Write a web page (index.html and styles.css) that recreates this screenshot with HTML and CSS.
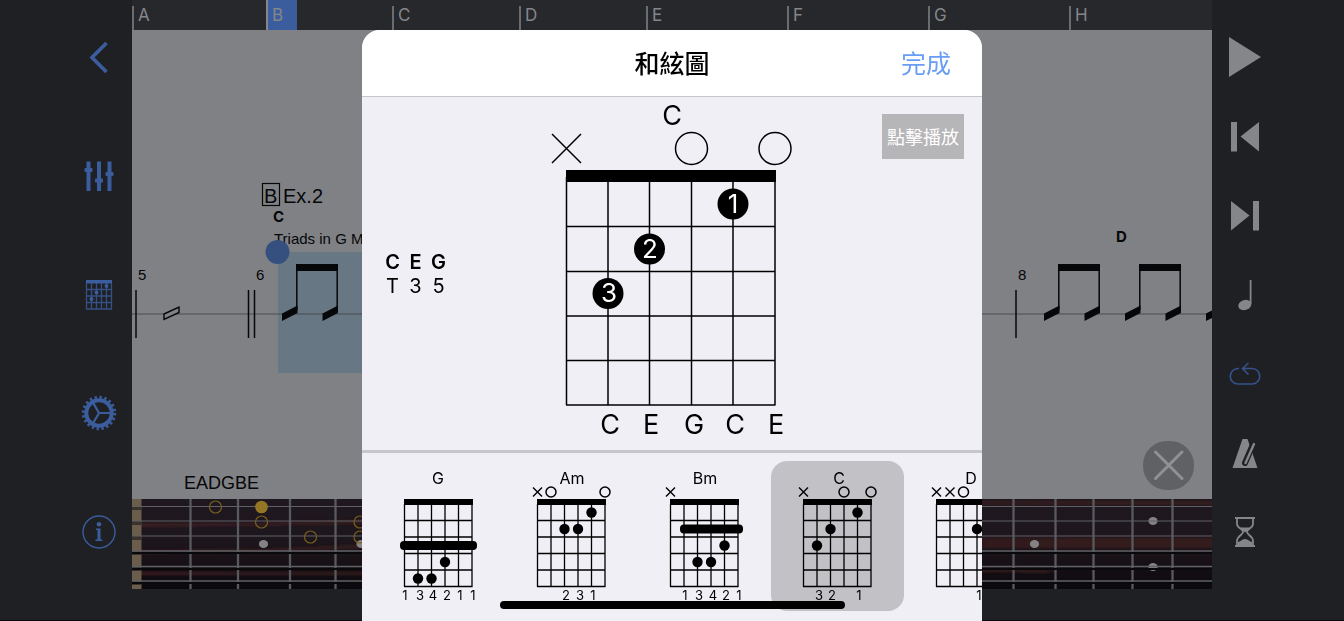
FILE: index.html
```html
<!DOCTYPE html>
<html lang="zh-Hant">
<head>
    <meta charset="UTF-8">
    <meta name="viewport" content="width=device-width, initial-scale=1.0">
    <title>和絃圖</title>
    <link rel="stylesheet" href="styles.css">
</head>
<body>

    <!-- Shared shapes -->
    <svg class="defs" width="0" height="0" aria-hidden="true">
        <defs>
            <g id="grid">
                <rect x="32" y="38" width="69" height="6"/>
                <path d="M32.5 43V126M46 43V126M59.5 43V126M73 43V126M86.5 43V126M100 43V126M32 59.5H100.5M32 76H100.5M32 92.5H100.5M32 109H100.5M32 125.5H100.5" fill="none" stroke="#000" stroke-width="1.3"/>
            </g>
            <path id="mute" d="M-4.5 -4.5L4.5 4.5M4.5 -4.5L-4.5 4.5" fill="none" stroke="#000" stroke-width="1.4"/>
            <circle id="open" r="5" fill="none" stroke="#000" stroke-width="1.5"/>
            <circle id="dot" r="5.2"/>
            <path id="slash" d="M0 283.5L15.5 275.5V283L0 291Z"/>
            <g id="eighths">
                <use href="#slash"/>
                <use href="#slash" x="40.5"/>
                <path d="M14 234H56V241H14Z"/>
                <path d="M14.8 234V280M55.2 234V280" stroke="#060709" stroke-width="1.5"/>
            </g>
            <linearGradient id="wood" x1="0" y1="0" x2="0" y2="1">
                <stop offset="0" stop-color="#1f1820"/>
                <stop offset="0.45" stop-color="#1d161c"/>
                <stop offset="0.75" stop-color="#160f14"/>
                <stop offset="1" stop-color="#0a090d"/>
            </linearGradient>
            <linearGradient id="grain">
                <stop offset="0" stop-color="#3b1f22"/>
                <stop offset="0.3" stop-color="#2b191d"/>
                <stop offset="1" stop-color="#361a1c"/>
            </linearGradient>
            <filter id="soft" x="0" width="1" y="-0.5" height="2">
                <feGaussianBlur stdDeviation="6 1"/>
            </filter>
        </defs>
    </svg>

    <div class="app">
        <!-- Left tools -->
        <nav class="tools tools-left">
            <button class="tool" aria-label="返回">
                <svg width="36" height="36" viewBox="0 0 36 36"><path d="M25.5 4L11 18.5L25.5 33" fill="none" stroke="currentColor" stroke-width="3.6"/></svg>
            </button>
            <button class="tool" aria-label="混音">
                <svg width="36" height="36" viewBox="0 0 36 36" fill="currentColor"><path d="M5.5 3.5H9.500V33H5.500ZM16 3.500H20V33H16ZM26.500 3.500H30.500V33H26.500Z"/><rect x="3.500" y="10" width="8" height="4" rx="1"/><rect x="14" y="20.500" width="8" height="4" rx="1"/><rect x="24.500" y="14" width="8" height="4" rx="1"/></svg>
            </button>
            <button class="tool" aria-label="和絃圖">
                <svg width="36" height="36" viewBox="0 0 36 36" fill="currentColor"><path d="M5 3H31V6.5H5Z"/><path d="M5.500 5V32.500M10.500 5V32.500M15.500 5V32.500M20.500 5V32.500M25.500 5V32.500M30.500 5V32.500M5 12.500H31M5 19H31M5 25.500H31M5 32H31" stroke="currentColor" stroke-width="1.3" opacity="0.8"/><circle cx="25.5" cy="9" r="2"/><circle cx="15.5" cy="15.5" r="2"/><circle cx="10.5" cy="22" r="2"/></svg>
            </button>
            <button class="tool" aria-label="設定">
                <svg width="36" height="36" viewBox="0 0 36 36" fill="none" stroke="currentColor"><circle cx="18" cy="18" r="15.700" stroke-width="3" stroke-dasharray="2.3 2.632"/><circle cx="18" cy="18" r="12.7" stroke-width="4"/><path d="M18 18H30M18 18L12 7.6M18 18L12 28.4" stroke-width="2.2"/></svg>
            </button>
            <button class="tool" aria-label="資訊">
                <svg width="36" height="36" viewBox="0 0 36 36"><circle cx="18" cy="18" r="16" fill="none" stroke="currentColor" stroke-width="1.4"/><circle cx="18" cy="10.2" r="2.3" fill="currentColor"/><path d="M15 14.5H19.5V25.500H21.500V27H14.500V25.500H16.500V16H15Z" fill="currentColor"/></svg>
            </button>
        </nav>

        <main class="stage">
            <div class="timeline">
                <span class="mark">A</span>
                <span class="mark current">B</span>
                <span class="mark">C</span>
                <span class="mark">D</span>
                <span class="mark">E</span>
                <span class="mark">F</span>
                <span class="mark">G</span>
                <span class="mark">H</span>
            </div>

            <div class="score">
                <svg class="sheet" width="100%" height="100%" fill="#060709">
                    <rect x="146" y="222" width="216" height="121" fill="#677784"/>
                    <path d="M0 284H1080" stroke="#4b4c50" stroke-width="1"/>
                    <path d="M4 260V308M116.5 260V308M122.5 260V308M884 260V308" stroke="#060709" stroke-width="1.5"/>
                    <path d="M32 284L47 277V282.5L32 289.5Z" fill="#808184" stroke="#060709" stroke-width="1.4"/>
                    <use href="#eighths" x="150"/>
                    <use href="#eighths" x="912"/>
                    <use href="#eighths" x="993"/>
                    <use href="#slash" x="1074"/>
                    <rect x="130.5" y="153.5" width="17" height="22" fill="none" stroke="#060709" stroke-width="1.2"/>
                    <text class="heading" x="132" y="173">B</text>
                    <text class="heading" x="151" y="173">Ex.2</text>
                    <text class="chord" x="141" y="192">C</text>
                    <text class="small" x="142" y="214">Triads in G Major</text>
                    <text class="chord" x="984" y="212">D</text>
                    <text class="small" x="6" y="250">5</text>
                    <text class="small" x="124" y="250">6</text>
                    <text class="small" x="886" y="250">8</text>
                    <text class="tuning" x="52" y="459">EADGBE</text>
                    <circle cx="145.5" cy="222" r="12" fill="#35507f"/>
                </svg>
                <button class="close" aria-label="關閉">
                    <svg width="32" height="32" viewBox="0 0 32 32"><path d="M2.5 2L29 28.5M29 2L2.5 28.5" stroke="#909195" stroke-width="3" stroke-linecap="round"/></svg>
                </button>
            </div>

            <svg class="fretboard" width="100%" height="90">
                <rect width="100%" height="90" fill="url(#wood)"/>
                <g filter="url(#soft)">
                    <path d="M0 24H120L240 20V25L120 27L0 28ZM0 51L130 50L240 45V49L130 53L0 55ZM0 73H240V76H0ZM840 39H1090V49H840ZM840 2H1090V6H840ZM840 68L920 71V74L840 73Z" fill="url(#grain)"/>
                </g>
                <path d="M58.5 0V90M106 0V90M158 0V90M203.5 0V90M881.5 0V90M923.5 0V90M961.5 0V90M1000.5 0V90M1040.5 0V90" stroke="#595a5f" stroke-width="2.3"/>
                <rect width="9.5" height="90" fill="#6b5d4c"/>
                <path d="M0 9H9.5M0 24H9.5M0 39H9.5M0 54H9.5M0 70H9.5M0 84H9.5" stroke="#3a332c" stroke-width="4"/>
                <g fill="#838385"><ellipse cx="131.5" cy="45" rx="4.6" ry="4"/><ellipse cx="229" cy="45" rx="4.6" ry="4"/><ellipse cx="902.5" cy="45" rx="4.6" ry="4"/><ellipse cx="1021" cy="22" rx="4.6" ry="4"/><ellipse cx="1021" cy="68" rx="4.6" ry="4"/></g>
                <path d="M0 54H1080M0 70H1080M0 84H1080" stroke="#09080b" stroke-width="2"/>
                <g stroke="#606166"><path d="M0 7.5H1080M0 22H1080M0 37H1080" stroke-width="1"/><path d="M0 52H1080M0 67.5H1080M0 82H1080" stroke-width="1.6"/></g>
                <g fill="none" stroke="#77601f" stroke-width="1.2"><circle cx="83.5" cy="8" r="6"/><circle cx="129.5" cy="23" r="6"/><circle cx="178.5" cy="38" r="6"/><circle cx="228" cy="23" r="6"/><circle cx="228" cy="38" r="6"/></g>
                <circle cx="129.5" cy="8" r="6.3" fill="#947624"/>
            </svg>
        </main>

        <!-- Right transport -->
        <nav class="tools tools-right">
            <button class="tool" aria-label="播放">
                <svg width="36" height="42" viewBox="0 0 36 42" fill="currentColor"><path d="M2 1L34 21L2 41Z"/></svg>
            </button>
            <button class="tool" aria-label="上一段">
                <svg width="36" height="36" viewBox="0 0 36 36" fill="currentColor"><path d="M4 4H10V33.5H4ZM32 4V33.5L13.5 18.500Z"/></svg>
            </button>
            <button class="tool" aria-label="下一段">
                <svg width="36" height="36" viewBox="0 0 36 36" fill="currentColor"><path d="M26 4H32V33.5H26ZM4 4V33.5L22.500 18.500Z"/></svg>
            </button>
            <button class="tool" aria-label="速度">
                <svg width="36" height="36" viewBox="0 0 36 36" fill="currentColor"><ellipse cx="17.8" cy="29" rx="6.7" ry="5" transform="rotate(-18 17.8 29)"/><path d="M22.7 4H24.500V28H22.700Z"/></svg>
            </button>
            <button class="tool loop" aria-label="循環">
                <svg width="36" height="36" viewBox="0 0 36 36" fill="none" stroke="currentColor" stroke-width="1.6"><path d="M12 12.5H11A7.700 7.700 0 0 0 11 28H25A7.700 7.700 0 0 0 25 12.500H16M21.500 7L15.500 12.500L21.500 18.500"/></svg>
            </button>
            <button class="tool" aria-label="節拍器">
                <svg width="36" height="36" viewBox="0 0 36 36"><path d="M15.5 4H20.5L30.5 33H5.500Z" fill="currentColor"/><path d="M26 9.500L18 28" stroke="#1f2024" stroke-width="6" stroke-linecap="round"/><path d="M27 9L18.500 28" stroke="currentColor" stroke-width="2.4" stroke-linecap="round"/></svg>
            </button>
            <button class="tool" aria-label="倒數">
                <svg width="36" height="36" viewBox="0 0 36 36"><path d="M8 4H28M8 32H28" stroke="currentColor" stroke-width="2"/><path d="M10 4V10C10 14 16 15 16 18C16 21 10 22 10 27V32M26 4V10C26 14 20 15 20 18C20 21 26 22 26 27V32" fill="none" stroke="currentColor" stroke-width="1.8"/><path d="M11 13.500H25L18 18.500ZM11 31V28C13 28 15 25 18 25S23 28 25 28V31Z" fill="currentColor"/></svg>
            </button>
        </nav>
    </div>

    <!-- Chord sheet -->
    <div class="overlay">
        <section class="modal" role="dialog" aria-labelledby="modalTitle">
            <header class="modal-header">
                <h1 id="modalTitle">和絃圖</h1>
                <button class="done">完成</button>
            </header>

            <div class="detail">
                <table class="tones">
                    <tr><th>C</th><th>E</th><th>G</th></tr>
                    <tr><td>T</td><td>3</td><td>5</td></tr>
                </table>

                <svg class="big-chord" width="250" height="353">
                    <text x="125" y="28">C</text>
                    <g fill="none" stroke="#000" stroke-width="1.5">
                        <path d="M5 37L34 66M34 37L5 66"/>
                        <circle cx="144.5" cy="51.5" r="16"/>
                        <circle cx="228" cy="51.5" r="16"/>
                        <path d="M19.5 80V308M61 80V308M102.5 80V308M144.5 80V308M186 80V308M228 80V308M19 129.5H228.5M19 174.5H228.5M19 219H228.5M19 263.5H228.5M19 308H228.5"/>
                    </g>
                    <rect x="19" y="73" width="210" height="12"/>
                    <circle cx="186" cy="107" r="15.5"/>
                    <circle cx="102.5" cy="152" r="15.5"/>
                    <circle cx="61" cy="196.5" r="15.5"/>
                    <g class="finger">
                        <text x="186" y="116">1</text>
                        <text x="103" y="161">2</text>
                        <text x="62" y="205">3</text>
                    </g>
                    <text x="63" y="337">C</text>
                    <text x="104" y="337">E</text>
                    <text x="147" y="337">G</text>
                    <text x="188" y="337">C</text>
                    <text x="229" y="337">E</text>
                </svg>

                <button class="play">點擊播放</button>
            </div>

            <div class="strip">
                <button class="card" aria-label="G">
                    <svg width="133" height="150">
                        <text class="name" x="66" y="23">G</text>
                        <use href="#grid"/>
                        <rect x="28" y="80" width="77" height="9" rx="4"/>
                        <use href="#dot" x="73" y="101"/><use href="#dot" x="46" y="117.5"/><use href="#dot" x="59.5" y="117.5"/>
                        <text x="33" y="139">1</text><text x="48" y="139">3</text><text x="61" y="139">4</text><text x="75" y="139">2</text><text x="88" y="139">1</text><text x="101" y="139">1</text>
                    </svg>
                </button>
                <button class="card" aria-label="Am">
                    <svg width="133" height="150">
                        <text class="name" x="67" y="23">Am</text>
                        <use href="#grid"/>
                        <use href="#mute" x="32.5" y="31"/><use href="#open" x="46" y="31"/><use href="#open" x="100" y="31"/>
                        <use href="#dot" x="86.5" y="51.5"/><use href="#dot" x="59.5" y="68"/><use href="#dot" x="73" y="68"/>
                        <text x="61" y="139">2</text><text x="75" y="139">3</text><text x="88" y="139">1</text>
                    </svg>
                </button>
                <button class="card" aria-label="Bm">
                    <svg width="133" height="150">
                        <text class="name" x="67" y="23">Bm</text>
                        <use href="#grid"/>
                        <use href="#mute" x="32.5" y="31"/>
                        <rect x="42" y="63.5" width="63" height="9" rx="4"/>
                        <use href="#dot" x="86.5" y="84.5"/><use href="#dot" x="59.5" y="101"/><use href="#dot" x="73" y="101"/>
                        <text x="47" y="139">1</text><text x="61" y="139">3</text><text x="75" y="139">4</text><text x="88" y="139">2</text><text x="101" y="139">1</text>
                    </svg>
                </button>
                <button class="card selected" aria-label="C">
                    <svg width="133" height="150">
                        <text class="name" x="68" y="23">C</text>
                        <use href="#grid"/>
                        <use href="#mute" x="32.5" y="31"/><use href="#open" x="73" y="31"/><use href="#open" x="100" y="31"/>
                        <use href="#dot" x="86.5" y="51.5"/><use href="#dot" x="59.5" y="68"/><use href="#dot" x="46" y="84.5"/>
                        <text x="48" y="139">3</text><text x="61" y="139">2</text><text x="88" y="139">1</text>
                    </svg>
                </button>
                <button class="card" aria-label="D">
                    <svg width="133" height="150">
                        <text class="name" x="67" y="23">D</text>
                        <use href="#grid"/>
                        <use href="#mute" x="32.5" y="31"/><use href="#mute" x="46" y="31"/><use href="#open" x="59.5" y="31"/>
                        <use href="#dot" x="73" y="68"/><use href="#dot" x="100" y="68"/><use href="#dot" x="86.5" y="84.5"/>
                        <text x="75" y="139">1</text>
                    </svg>
                </button>
            </div>
        </section>
        <div class="home-bar"></div>
    </div>

</body>
</html>
```

FILE: styles.css
```css
* {
    box-sizing: border-box;
}

body {
    margin: 0;
    font-family: Inter, "Noto Sans CJK TC", sans-serif;
    background-color: #1f2024;
    color: #000;
    overflow: hidden;
}

button {
    border: none;
    padding: 0;
    margin: 0;
    background: none;
    font-family: inherit;
    color: inherit;
    cursor: pointer;
}

svg {
    display: block;
}

.defs {
    position: absolute;
}

.app {
    display: grid;
    grid-template-columns: 132px 1fr 132px;
    height: 100vh;
    border-bottom: 1px solid #0b080d;
}

/* Side toolbars */
.tools {
    display: flex;
    flex-direction: column;
    justify-content: space-between;
    padding: 32px 0 63px;
}

.tools-left {
    padding-left: 66px;
    color: #3b5d9d;
}

.tools-right {
    padding-right: 66px;
    color: #858689;
}

.tool {
    display: flex;
    align-items: center;
    justify-content: center;
    height: 50px;
}

.loop {
    color: #35528c;
}

/* Timeline and score */
.stage {
    display: flex;
    flex-direction: column;
    min-width: 0;
    padding-bottom: 31px;
}

.timeline {
    display: grid;
    grid-template-columns: 134fr 126fr 127fr 127fr 141fr 141fr 141fr 143fr;
    align-items: end;
    height: 30px;
    background-color: #27282c;
    color: #85868a;
}

.mark {
    height: 24px;
    padding-left: 4px;
    border-left: 2px solid #6b6c70;
    font-size: 17px;
    line-height: 18px;
}

.current {
    height: 30px;
    padding-top: 6px;
    background: linear-gradient(#3b5d9d, #3b5d9d) no-repeat 0 0 / 29px 100%;
    border-color: #85868a;
}

.score {
    position: relative;
    flex: 1;
    min-height: 0;
    background-color: #808184;
}

.sheet {
    position: absolute;
    font-family: "Liberation Sans", sans-serif;
}

.heading {
    font-size: 20px;
}

.small {
    font-size: 15px;
}

.chord {
    font-family: Inter, sans-serif;
    font-size: 15px;
    font-weight: 700;
}

.tuning {
    font-size: 18px;
}

.close {
    position: absolute;
    right: 18px;
    bottom: 9px;
    display: flex;
    align-items: center;
    justify-content: center;
    width: 51px;
    height: 49px;
    border-radius: 24px;
    background-color: #606165;
}

.fretboard {
    flex: none;
}

/* Chord sheet */
.overlay {
    position: fixed;
    inset: 0;
    display: flex;
    justify-content: center;
    padding-top: 30px;
}

.modal {
    display: flex;
    flex-direction: column;
    width: 620px;
    overflow: hidden;
    border-radius: 18px 18px 0 0;
    background-color: #f0eff5;
}

.modal-header {
    display: grid;
    grid-template-columns: 1fr auto 1fr;
    align-items: center;
    height: 67px;
    padding: 2px 31px 0;
    border-bottom: 1px solid #c4c4c9;
    background-color: #fff;
}

.modal-header h1 {
    grid-column: 2;
    margin: 0;
    font-size: 25px;
    font-weight: 500;
    line-height: 36px;
}

.done {
    justify-self: end;
    color: #699df5;
    font-size: 25px;
    line-height: 36px;
}

.detail {
    display: grid;
    grid-template-columns: 1fr auto 1fr;
    height: 356px;
    border-bottom: 3px solid #c7c6cb;
}

.tones {
    align-self: center;
    justify-self: start;
    margin-left: 19px;
    border-spacing: 0;
    font-size: 20px;
    line-height: 24px;
    text-align: center;
}

.tones th,
.tones td {
    width: 23px;
    padding: 0;
}

.tones th {
    font-weight: 600;
}

.big-chord {
    font-size: 27px;
    text-anchor: middle;
}

.finger {
    fill: #fff;
    font-size: 26px;
}

.play {
    justify-self: end;
    align-self: start;
    margin: 17px 18px 0 0;
    padding: 0 5px 2px;
    height: 45px;
    background-color: #b6b5b8;
    color: #fff;
    font-size: 18px;
}

.strip {
    display: flex;
    padding: 8px 0 0 10px;
}

.card {
    flex: none;
    border-radius: 16px;
    font-size: 13px;
    text-anchor: middle;
}

.selected {
    background-color: #c2c1c6;
}

.name {
    font-size: 16px;
}

.home-bar {
    position: absolute;
    bottom: 12px;
    width: 345px;
    height: 8px;
    border-radius: 4px;
    background-color: #000;
}
```
